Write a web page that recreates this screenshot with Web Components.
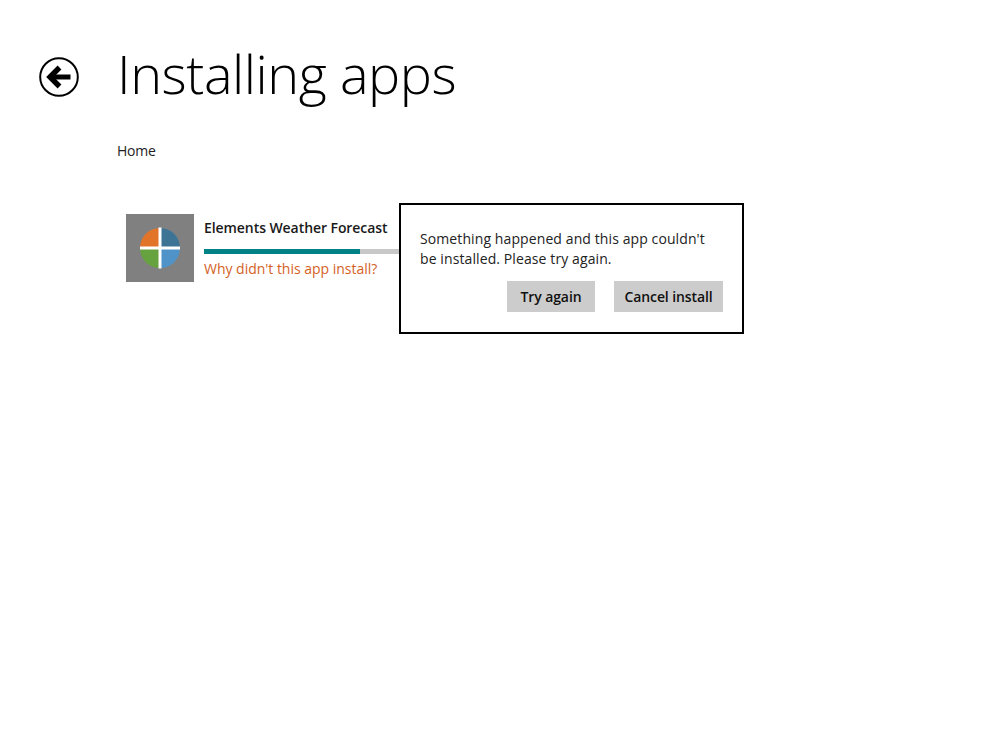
<!DOCTYPE html>
<html>
<head>
<meta charset="utf-8">
<title>Installing apps</title>
<style>
  html, body { margin: 0; height: 100%; background: #fff; }
  body { font-family: "Open Sans", "Noto Sans", "Liberation Sans", sans-serif; color: #111; }
</style>
</head>
<body>
<install-page></install-page>

<script>
class BackButton extends HTMLElement {
    connectedCallback() {
        this.attachShadow({ mode: 'open' });
        this.shadowRoot.innerHTML = `
            <style>
                :host { display: block; width: 40px; height: 40px; }
                svg { display: block; }
            </style>
            <svg width="40" height="40" viewBox="0 0 40 40" fill="none" aria-label="Back">
                <circle cx="20" cy="20" r="18.8" stroke="#000" stroke-width="2"/>
                <path d="M31.5 20H14" stroke="#000" stroke-width="5"/>
                <path d="M20.5 10.5L11 20l9.5 9.5" stroke="#000" stroke-width="5.4"/>
            </svg>
        `;
    }
}

class AppTile extends HTMLElement {
    connectedCallback() {
        this.attachShadow({ mode: 'open' });
        this.shadowRoot.innerHTML = `
            <style>
                :host { display: block; width: 68px; height: 68px; background: #808080; }
                svg { display: block; }
            </style>
            <svg width="68" height="68" viewBox="0 0 68 68">
                <path d="M34 34V14A20 20 0 0 0 14 34Z" fill="#e2742a"/>
                <path d="M34 34V14A20 20 0 0 1 54 34Z" fill="#3d7496"/>
                <path d="M34 34H14A20 20 0 0 0 34 54Z" fill="#66a340"/>
                <path d="M34 34H54A20 20 0 0 1 34 54Z" fill="#4f93c8"/>
                <path d="M34 13.5V54.5M14 34H54" stroke="#fff" stroke-width="3"/>
            </svg>
        `;
    }
}

class ProgressBar extends HTMLElement {
    connectedCallback() {
        this.attachShadow({ mode: 'open' });
        const value = this.getAttribute('value') || 0;
        this.shadowRoot.innerHTML = `
            <style>
                :host { display: block; height: 5px; background: #c8c8c8; }
                div { height: 100%; background: #008287; }
            </style>
            <div style="width: ${value}%"></div>
        `;
    }
}

class InstallItem extends HTMLElement {
    connectedCallback() {
        this.attachShadow({ mode: 'open' });
        this.shadowRoot.innerHTML = `
            <style>
                :host { display: flex; gap: 10px; width: 300px; }
                .info { flex: 1; min-width: 0; display: flex; flex-direction: column; }
                .name {
                    height: 35px;
                    padding-top: 4px;
                    box-sizing: border-box;
                    font-size: 14px;
                    line-height: 20px;
                    font-weight: 600;
                    letter-spacing: -0.07px;
                    color: #1a1a1a;
                    white-space: nowrap;
                }
                .why {
                    margin-top: 5px;
                    font-size: 14px;
                    line-height: 20px;
                    letter-spacing: -0.02px;
                    color: #d4611f;
                    white-space: nowrap;
                }
            </style>
            <app-tile></app-tile>
            <div class="info">
                <div class="name"><slot name="name"></slot></div>
                <progress-bar value="70.3"></progress-bar>
                <div class="why"><slot name="link"></slot></div>
            </div>
        `;
    }
}

class ErrorFlyout extends HTMLElement {
    connectedCallback() {
        this.attachShadow({ mode: 'open' });
        this.shadowRoot.innerHTML = `
            <style>
                :host {
                    display: block;
                    position: absolute;
                    left: 399px;
                    top: 203px;
                    width: 345px;
                    height: 131px;
                    box-sizing: border-box;
                    padding: 24px 19px 0;
                    background: #fff;
                    border: 2px solid #000;
                }
                p {
                    margin: 0;
                    max-width: 292px;
                    font-size: 14px;
                    line-height: 19.5px;
                    letter-spacing: 0.1px;
                    color: #222;
                }
                .actions { display: flex; justify-content: flex-end; gap: 19px; margin-top: 13px; }
            </style>
            <p><slot></slot></p>
            <div class="actions"><slot name="actions"></slot></div>
        `;
    }
}

class FlatButton extends HTMLElement {
    connectedCallback() {
        this.attachShadow({ mode: 'open' });
        this.shadowRoot.innerHTML = `
            <style>
                :host {
                    display: flex;
                    align-items: center;
                    justify-content: center;
                    height: 31px;
                    background: #cccccc;
                    font-size: 14px;
                    font-weight: 600;
                    letter-spacing: -0.1px;
                    color: #111;
                    cursor: default;
                }
            </style>
            <slot></slot>
        `;
    }
}

class InstallPage extends HTMLElement {
    connectedCallback() {
        this.attachShadow({ mode: 'open' });
        this.shadowRoot.innerHTML = `
            <style>
                :host { display: block; position: relative; height: 750px; overflow: hidden; }
                header { display: flex; align-items: flex-start; padding: 38px 0 0 39px; gap: 38px; }
                back-button { margin-top: 19px; }
                h1 {
                    margin: 0;
                    font-size: 54px;
                    line-height: 70px;
                    font-weight: 300;
                    letter-spacing: -0.45px;
                    color: #000;
                }
                .crumb {
                    margin: 33px 0 0 117px;
                    font-size: 14px;
                    line-height: 20px;
                    letter-spacing: -0.2px;
                    color: #222;
                }
                .list { padding: 53px 0 0 126px; }
            </style>
            <header>
                <back-button></back-button>
                <h1>Installing apps</h1>
            </header>
            <div class="crumb">Home</div>
            <div class="list">
                <install-item>
                    <span slot="name">Elements Weather Forecast</span>
                    <span slot="link">Why didn't this app install?</span>
                </install-item>
            </div>
            <error-flyout>
                Something happened and this app couldn't be installed. Please try again.
                <flat-button slot="actions" style="width: 88px">Try again</flat-button>
                <flat-button slot="actions" style="width: 109px">Cancel install</flat-button>
            </error-flyout>
        `;
    }
}

customElements.define('back-button', BackButton);
customElements.define('app-tile', AppTile);
customElements.define('progress-bar', ProgressBar);
customElements.define('install-item', InstallItem);
customElements.define('error-flyout', ErrorFlyout);
customElements.define('flat-button', FlatButton);
customElements.define('install-page', InstallPage);
</script>
</body>
</html>
